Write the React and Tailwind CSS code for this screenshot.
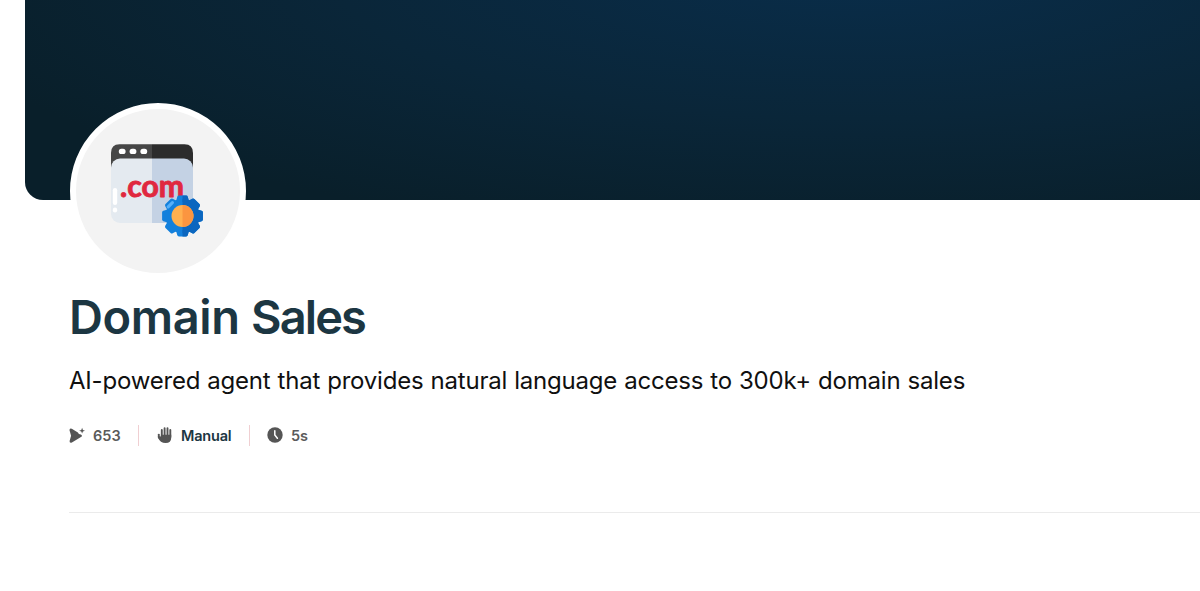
import React from 'react';

const teeth = [0, 45, 90, 135, 180, 225, 270, 315];

function Gear({ fill }) {
    return (
        <g fill={fill}>
            <circle cx="77.5" cy="78" r="17" />
            {teeth.map(angle => (
                <path
                    key={angle}
                    d="M70.8 64 L72.2 58.9 Q72.6 57.6 73.9 57.6 H81.1 Q82.4 57.6 82.8 58.9 L84.2 64 Z"
                    transform={`rotate(${angle} 77.5 78)`}
                />
            ))}
        </g>
    );
}

function DomainLogo() {
    return (
        <svg viewBox="0 0 105 105" className="w-[105px] h-[105px] shrink-0 -mt-0.5">
            <defs>
                <clipPath id="left-window"><rect x="0" y="0" width="47" height="105" /></clipPath>
                <clipPath id="right-window"><rect x="47" y="0" width="60" height="105" /></clipPath>
                <clipPath id="right-gear"><rect x="77.5" y="50" width="28" height="55" /></clipPath>
            </defs>
            {/* Browser window */}
            <path d="M6 34 V15 Q6 6.3 14.5 6.3 H79.5 Q88 6.3 88 15 V34 Z" fill="#464646" clipPath="url(#left-window)" />
            <path d="M6 34 V15 Q6 6.3 14.5 6.3 H79.5 Q88 6.3 88 15 V34 Z" fill="#2c2c2c" clipPath="url(#right-window)" />
            <rect x="6" y="20.5" width="82" height="64.5" rx="9" fill="#e4eaf0" clipPath="url(#left-window)" />
            <rect x="6" y="20.5" width="82" height="64.5" rx="9" fill="#c4d2e4" clipPath="url(#right-window)" />
            <g fill="#fff">
                <rect x="13.8" y="10.8" width="6.8" height="5.2" rx="2.6" />
                <rect x="24.6" y="10.8" width="6.8" height="5.2" rx="2.6" />
                <rect x="35.4" y="10.8" width="6.8" height="5.2" rx="2.6" />
                <rect x="7.8" y="50" width="4.4" height="17" rx="2.2" />
                <rect x="7.8" y="69.5" width="4.4" height="5" rx="2.2" />
            </g>
            <text
                x="15"
                y="59"
                textLength="64"
                lengthAdjust="spacingAndGlyphs"
                fill="#e0283f"
                stroke="#e0283f"
                strokeWidth="0.9"
                strokeLinejoin="round"
                className="text-[30px] font-bold font-['Lato',sans-serif]"
            >
                .com
            </text>
            <Gear fill="#1380dc" />
            <g clipPath="url(#right-gear)"><Gear fill="#0b66bf" /></g>
            <circle cx="77.5" cy="78" r="11" fill="#ffb04f" />
            <path d="M77.5 67 A11 11 0 0 1 77.5 89 Z" fill="#fb9540" />
            <path d="M63.2 68.8 L67.4 64.7" stroke="#55b0fa" strokeWidth="3.2" strokeLinecap="round" />
        </svg>
    );
}

function RunsIcon() {
    return (
        <svg viewBox="0 0 17 17" className="w-[17px] h-[17px]" fill="#555">
            <path d="M0.5 3.3 Q0.5 0.7 2.8 1.8 L8.9 5.4 Q9.5 7.4 11.8 7.5 L12.5 7.9 Q13.7 8.9 12.4 9.8 L2.9 15.5 Q.4 16.5 .6 14 L2.1 8.8 Z" />
            <path d="M13.1 0.8 L13.9 2.9 L16 3.7 L13.9 4.5 L13.1 6.6 L12.3 4.5 L10.2 3.7 L12.3 2.9 Z" />
        </svg>
    );
}

function HandIcon() {
    return (
        <svg viewBox="0 0 16 17" className="w-4 h-[17px]" fill="none" stroke="#555" strokeLinecap="round">
            <path d="M4.8 3 V10 M7.6 1.3 V9 M10.5 1.3 V9 M13.3 3 V10" strokeWidth="1.9" />
            <path d="M1.8 7.6 V10.5" strokeWidth="1.9" />
            <path d="M0.9 9 L3.9 9.4 V7.8 H14.25 V10.5 Q14.2 16 8.6 16 Q3.2 16 1 10.8 Z" fill="#555" stroke="none" />
        </svg>
    );
}

function ClockIcon() {
    return (
        <svg viewBox="0 0 16 16" className="w-4 h-4">
            <circle cx="8" cy="8" r="7.7" fill="#555" />
            <path d="M7.8 3.8 V8 L10.4 11.3" fill="none" stroke="#fff" strokeWidth="1.5" strokeLinecap="round" />
        </svg>
    );
}

export default function App() {
    return (
        <div className="h-[591px] overflow-hidden bg-white font-['Inter',sans-serif]">
            {/* Banner */}
            <div className="ml-[25px] h-[199.5px] rounded-bl-[18px] bg-[radial-gradient(ellipse_950px_270px_at_830px_-30px,#092d4a_0%,#0a2639_55%,#091f2a_100%)]" />

            <div className="ml-[69px] -mt-[96.5px] relative">
                <div className="w-[176px] h-[176px] ml-[0.5px] rounded-full border-[6px] border-white bg-[#f3f3f3] flex items-center justify-center">
                    <DomainLogo />
                </div>

                <h1 className="mt-[8px] h-[60px] text-[47px] leading-[60px] font-semibold text-[#1c3642] whitespace-nowrap">
                    <span className="tracking-[-0.4px]">Domain </span>
                    <span className="tracking-[-1.9px]">Sales</span>
                </h1>
                <p className="mt-[16px] h-9 text-2xl leading-9 text-[#101010] whitespace-nowrap tracking-[-0.2px] [word-spacing:0.5px]">AI-powered agent that provides natural language access to 300k+ domain sales</p>

                {/* Stats */}
                <div className="mt-[26px] h-5 flex items-center text-[14.5px] leading-5 font-semibold text-[#5b5b5b]">
                    <RunsIcon />
                    <span className="ml-[7px] w-[45px] pt-px">653</span>
                    <span className="w-px h-[21px] bg-[#f0cfd2]" />
                    <span className="ml-[18px]"><HandIcon /></span>
                    <span className="ml-2 w-[68px] pt-px tracking-[-0.2px] text-[#1c3642]">Manual</span>
                    <span className="w-px h-[21px] bg-[#f0cfd2]" />
                    <span className="ml-[17px]"><ClockIcon /></span>
                    <span className="ml-2 pt-px">5s</span>
                </div>

                <hr className="mt-[67px] border-[#ebebeb]" />
            </div>
        </div>
    );
}
